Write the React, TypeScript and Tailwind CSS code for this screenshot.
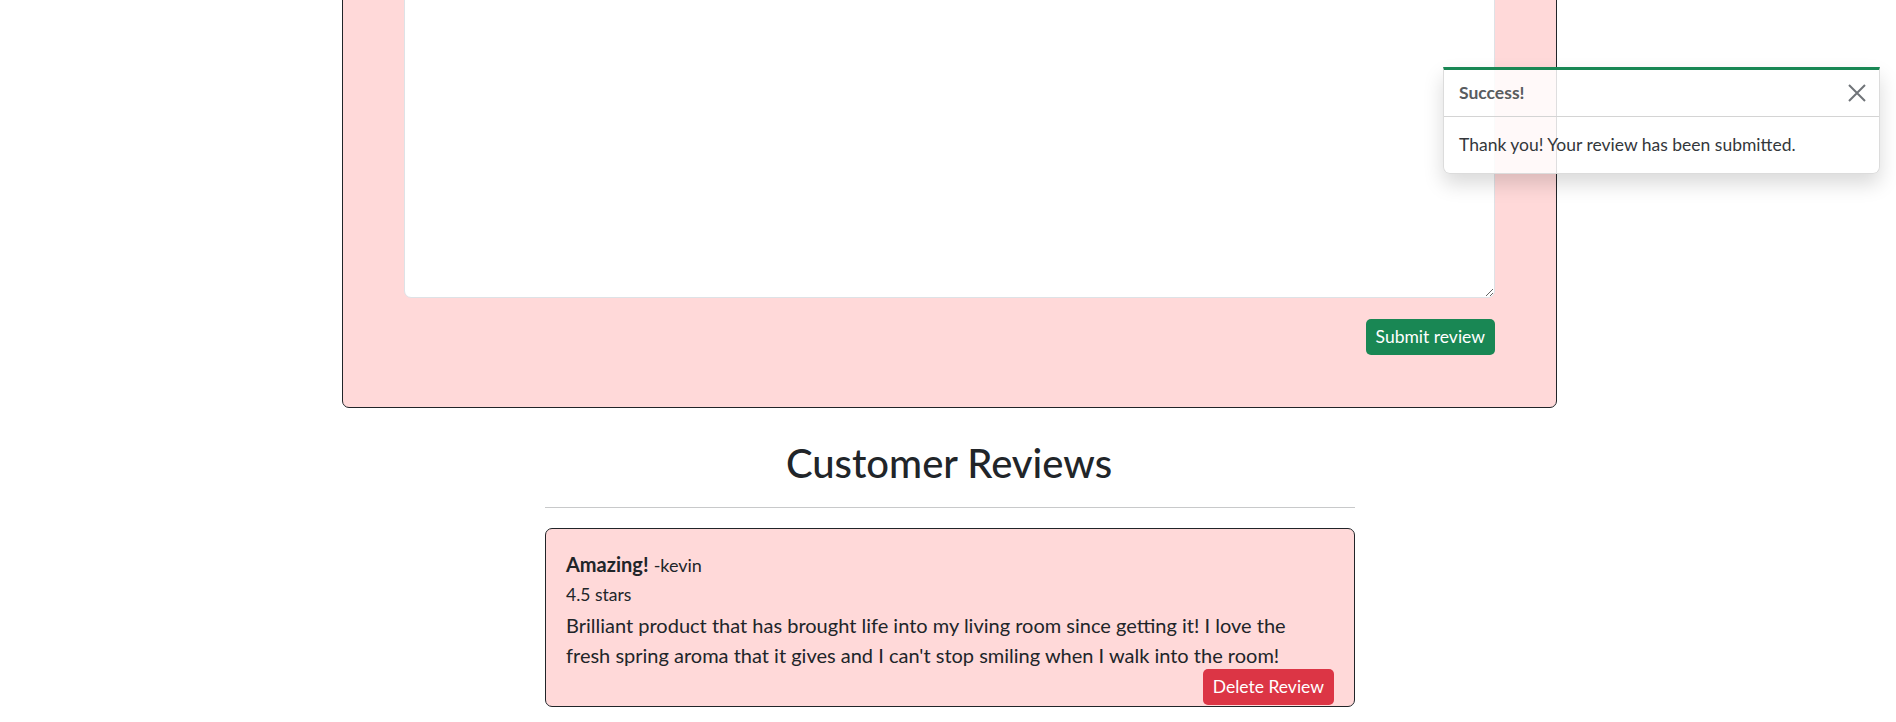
import React from "react";

const review = {
  title: "Amazing!",
  author: "kevin",
  rating: 4.5,
  body: "Brilliant product that has brought life into my living room since getting it! I love the fresh spring aroma that it gives and I can't stop smiling when I walk into the room!",
};

const Toast: React.FC = () => (
  <div className="absolute left-[1443px] top-[67px] w-[437px] rounded-b-[7px] border border-t-[3px] border-[#dcdcdc] border-t-[#198754] bg-white/85 shadow-[0_10px_20px_rgba(0,0,0,0.15)]">
    <div className="flex items-center justify-between border-b border-[#d4d4d4] px-[15px] py-[10px] text-[17.5px] leading-[26px]">
      <strong className="font-bold text-[#595c5f]">Success!</strong>
      <button className="mr-[-5px] flex h-[24px] w-[24px] items-center justify-center">
        <svg width="18" height="18" viewBox="0 0 18 18" fill="none">
          <path d="M1 1L17 17M17 1L1 17" stroke="#707479" strokeWidth="2" />
        </svg>
      </button>
    </div>
    <div className="p-[15px] text-[17.5px] leading-[26px] text-[#33373b]">
      Thank you! Your review has been submitted.
    </div>
  </div>
);

export default function App() {
  return (
    <div className="relative min-h-[722px] overflow-hidden bg-white font-['Lato',sans-serif] text-[#212529]">
      <div className="-mt-[163px] ml-[342px] w-[1215px] rounded-[7px] border border-[#212529] bg-[#ffd9d9] px-[61px] pb-[52px] pt-[60px]">
        <textarea
          className="block h-[400px] w-full rounded-[7px] border border-[#dee2e6] bg-white p-[10px] outline-none"
          defaultValue=""
        />
        <div className="mt-[21px] flex justify-end">
          <button className="rounded-[5px] bg-[#198754] px-[10px] py-[5px] text-[17.5px] leading-[26px] text-white">
            Submit review
          </button>
        </div>
      </div>

      <h1 className="mt-[31px] pl-[2px] text-center text-[40px] font-medium leading-[48px]">Customer Reviews</h1>

      <div className="ml-[545px] w-[810px]">
        <hr className="mt-[20px] border-t border-[#c8c9ca]" />
        <div className="mt-[20px] rounded-[7px] border border-[#212529] bg-[#ffd9d9] px-[20px] pb-px pt-[20px]">
          <div className="text-[20px] leading-[30px]">
            <strong className="font-bold">{review.title}</strong>{" "}
            <span className="text-[18px]">-{review.author}</span>
          </div>
          <div className="text-[17.5px] leading-[30px]">{review.rating} stars</div>
          <p className="text-[20px] leading-[30px]">{review.body}</p>
          <div className="-mt-px flex justify-end">
            <button className="rounded-[5px] bg-[#dc3545] px-[10px] py-[5px] text-[17.5px] leading-[26px] text-white">
              Delete Review
            </button>
          </div>
        </div>
      </div>

      <Toast />
    </div>
  );
}
